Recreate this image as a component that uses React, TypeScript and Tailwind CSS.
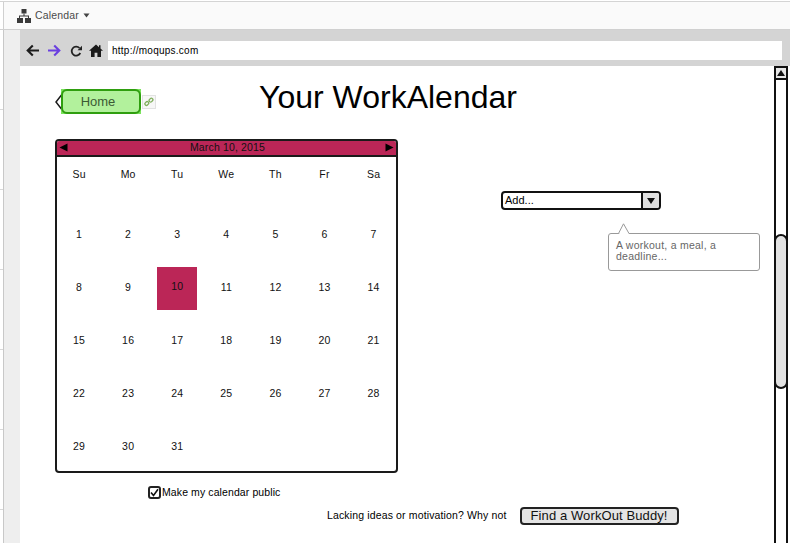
import React from "react";

const weeks: (number | null)[][] = [
  [1, 2, 3, 4, 5, 6, 7],
  [8, 9, 10, 11, 12, 13, 14],
  [15, 16, 17, 18, 19, 20, 21],
  [22, 23, 24, 25, 26, 27, 28],
  [29, 30, 31, null, null, null, null],
];
const days = ["Su", "Mo", "Tu", "We", "Th", "Fr", "Sa"];
const ticks = [0, 1, 2, 3, 4, 5, 6];

function Calendar() {
  return (
    <div className="w-[343px] h-[334px] border-2 border-[#1a1a1a] rounded-[4px] overflow-hidden bg-white">
      <div className="h-[15px] bg-[#bb2657] border-b-2 border-[#1a1a1a] flex items-center justify-between px-[2px] box-content -mt-[1px] text-[10.5px] text-[#111]">
        <svg width="9" height="9" viewBox="0 0 9 9"><path d="M0.5 4.5 L8.5 0.5 V8.5 Z" fill="#000" /></svg>
        <span className="ml-[2px] tracking-[0.15px]">March 10, 2015</span>
        <svg width="9" height="9" viewBox="0 0 9 9"><path d="M8.5 4.5 L0.5 0.5 V8.5 Z" fill="#000" /></svg>
      </div>
      <div className="-ml-[2.5px] grid grid-cols-[repeat(7,49.1px)] text-[10.5px] tracking-[0.2px] text-[#111]">
        {days.map((d) => (
          <div key={d} className="h-[51px] pb-[15px] flex items-center justify-center">{d}</div>
        ))}
        {weeks.flat().map((n, i) => (
          <div key={i} className="h-[53px] flex items-center justify-center">
            {n === 10 ? (
              <div className="w-[40px] h-[43px] mt-[1px] pb-[2px] bg-[#bb2657] flex items-center justify-center">10</div>
            ) : (
              n
            )}
          </div>
        ))}
      </div>
    </div>
  );
}

export default function App() {
  return (
    <div className="w-[790px] h-[543px] overflow-hidden bg-white flex flex-col font-['Liberation_Sans',Arial,sans-serif]">
      <div className="h-[30px] shrink-0 pt-[1px] bg-white flex flex-col">
        <div className="h-[1px] bg-[#d4d4d4] shrink-0" />
        <div className="flex-1 flex bg-[#fafafa] border-b border-[#d0d0d0]">
          <div className="w-[4px] shrink-0 bg-white border-r border-[#d0d0d0]" />
          <div className="flex items-center pl-[13px] text-[10.5px] text-[#4a4a4a]">
            <svg width="14" height="14" viewBox="0 0 14 14" fill="#3a3a3a">
              <rect x="4.5" y="0" width="5" height="4.5" />
              <rect x="0" y="9" width="6" height="5" />
              <rect x="8" y="9" width="6" height="5" />
              <path d="M6.5 4.5h1v2h4.5v2.5h-1V7.5H3V9H2V6.5h4.5z" />
            </svg>
            <span className="ml-[4px] tracking-[0.15px]">Calendar</span>
            <svg width="7" height="5" viewBox="0 0 7 5" className="ml-[4px]"><path d="M0.5 0.5h6L3.5 4.5z" fill="#444" /></svg>
          </div>
        </div>
      </div>

      <div className="flex-1 flex min-h-0">
        <div className="w-[4px] shrink-0 border-r border-[#c8c8c8] flex flex-col">
          {ticks.map((t) => (
            <div key={t} className="h-[80px] shrink-0 border-b border-[#d8d8d8]" />
          ))}
        </div>
        <div className="w-[16px] shrink-0 bg-[#eeeeee]" />
        <div className="flex-1 flex flex-col min-w-0">
          <div className="h-[36px] shrink-0 bg-[#d4d4d4] flex items-center pt-[5px] pl-[6px] pr-[8px]">
            <svg width="13" height="13" viewBox="0 0 13 13" fill="none" stroke="#1c1c1c" strokeWidth="2.1" className="shrink-0">
              <path d="M13 6.5H2M6.8 1.5 1.7 6.5 6.8 11.5" />
            </svg>
            <svg width="13" height="13" viewBox="0 0 13 13" fill="none" stroke="#6a3fe0" strokeWidth="2.1" className="ml-[9px] shrink-0">
              <path d="M0 6.5h11M6.2 1.5 11.3 6.5 6.2 11.5" />
            </svg>
            <svg width="12" height="12" viewBox="0 0 12 12" fill="none" stroke="#222" strokeWidth="1.8" className="ml-[9px] shrink-0">
              <path d="M10.3 8A4.5 4.5 0 1 1 9.5 3" />
              <path d="M7.5 5.3h4.5V0.8z" fill="#222" stroke="none" />
            </svg>
            <svg width="14" height="13" viewBox="0 0 14 13" fill="#1a1a1a" className="ml-[7px] shrink-0">
              <path d="M7 0.5 0 6.7h2V13h3.6V8.8h2.8V13H12V6.7h2L11.5 4.5V1.2H10v2z" />
            </svg>
            <div className="ml-[5px] flex-1 h-[19px] bg-white flex items-center pl-[4px] text-[10px] tracking-[0.25px] text-black">
              http://moqups.com
            </div>
          </div>

          <div className="flex-1 flex min-h-0">
            <div className="w-[754px] shrink-0 relative pl-[35px] pt-[22px]">
              <div className="flex items-start h-[51px]">
                <div className="relative flex items-center mt-[1px]">
                  <svg width="7" height="20" viewBox="0 0 7 20" fill="none" stroke="#1a1a1a" strokeWidth="1.5" className="shrink-0">
                    <path d="M6.5 3 1 10l5.5 7" />
                  </svg>
                  <div className="-ml-[1px] bg-[#7be35d]">
                    <div className="w-[80px] h-[25px] rounded-[6px] border-2 border-[#2f9e0f] bg-[#b2f19c] flex items-center justify-center pr-[6px] text-[13px] text-[#3c5a34]">
                      Home
                    </div>
                  </div>
                  <div className="ml-[1px] w-[14px] h-[14px] border border-[#e2e2e2] bg-[#f7f7f7] flex items-center justify-center">
                    <svg width="10" height="10" viewBox="0 0 10 10" fill="none" stroke="#7fae5c" strokeWidth="1.3">
                      <rect x="0.8" y="5" width="4" height="3" rx="1.4" transform="rotate(-45 2.8 6.5)" />
                      <rect x="5" y="1.6" width="4" height="3" rx="1.4" transform="rotate(-45 7 3.1)" />
                    </svg>
                  </div>
                </div>
                <h1 className="ml-[103px] -mt-[11px] text-[32px] leading-[40px] font-normal text-black whitespace-nowrap">Your WorkAlendar</h1>
              </div>

              <Calendar />

              <label className="ml-[93px] mt-[12px] h-[15px] flex items-center text-[10.5px] tracking-[0.1px] text-black">
                <span className="w-[13px] h-[13px] border-2 border-[#222] rounded-[3px] flex items-center justify-center mr-[1px]">
                  <svg width="9" height="9" viewBox="0 0 9 9" fill="none" stroke="#111" strokeWidth="1.6"><path d="M1 4.5 3.5 7.5 8 1.2" /></svg>
                </span>
                Make my calendar public
              </label>

              <div className="ml-[272px] mt-[7px] flex items-center text-[10.5px] tracking-[0.14px] text-black">
                <span>Lacking ideas or motivation? Why not</span>
                <button className="ml-[13px] w-[159px] h-[18px] border-2 border-[#222] rounded-[4px] bg-[#e4e4e4] text-[13px] tracking-[0.1px] text-[#111] flex items-center justify-center">
                  Find a WorkOut Buddy!
                </button>
              </div>

              <div className="absolute left-[481px] top-[125px] w-[160px] h-[19px] border-2 border-[#111] rounded-[4px] bg-white flex items-center overflow-hidden">
                <span className="flex-1 pl-[2px] text-[11px] text-black">Add...</span>
                <span className="w-[18px] h-full bg-[#e0e0e0] border-l-2 border-[#111] flex items-center justify-center">
                  <svg width="8" height="6" viewBox="0 0 8 6"><path d="M0 0h8L4 6z" fill="#111" /></svg>
                </span>
              </div>

              <div className="absolute left-[588px] top-[167px] w-[152px] h-[38px] border border-[#999] rounded-[3px] bg-white px-[7px] pt-[6px] text-[10.5px] leading-[11px] tracking-[0.25px] text-[#666]">
                A workout, a meal, a deadline...
                <svg width="12" height="11" viewBox="0 0 12 11" className="absolute left-[9px] -top-[11px]">
                  <path d="M0.5 10.5 5.5 0.8 11 10.5" fill="#fff" stroke="#999" />
                  <rect x="1.5" y="10" width="9" height="1.5" fill="#fff" />
                </svg>
              </div>
            </div>

            <div className="w-[14px] shrink-0 border-x-2 border-[#111] flex flex-col bg-white">
              <div className="h-[14px] shrink-0 border-y-2 border-[#111] bg-[#e6e6e6] flex items-center justify-center">
                <svg width="8" height="6" viewBox="0 0 8 6"><path d="M0 6h8L4 0z" fill="#111" /></svg>
              </div>
              <div className="mt-[154px] h-[155px] -mx-[2px] border-2 border-[#111] rounded-[7px] bg-[#e2e2e2]" />
            </div>
            <div className="flex-1 bg-white" />
          </div>
        </div>
      </div>
    </div>
  );
}
